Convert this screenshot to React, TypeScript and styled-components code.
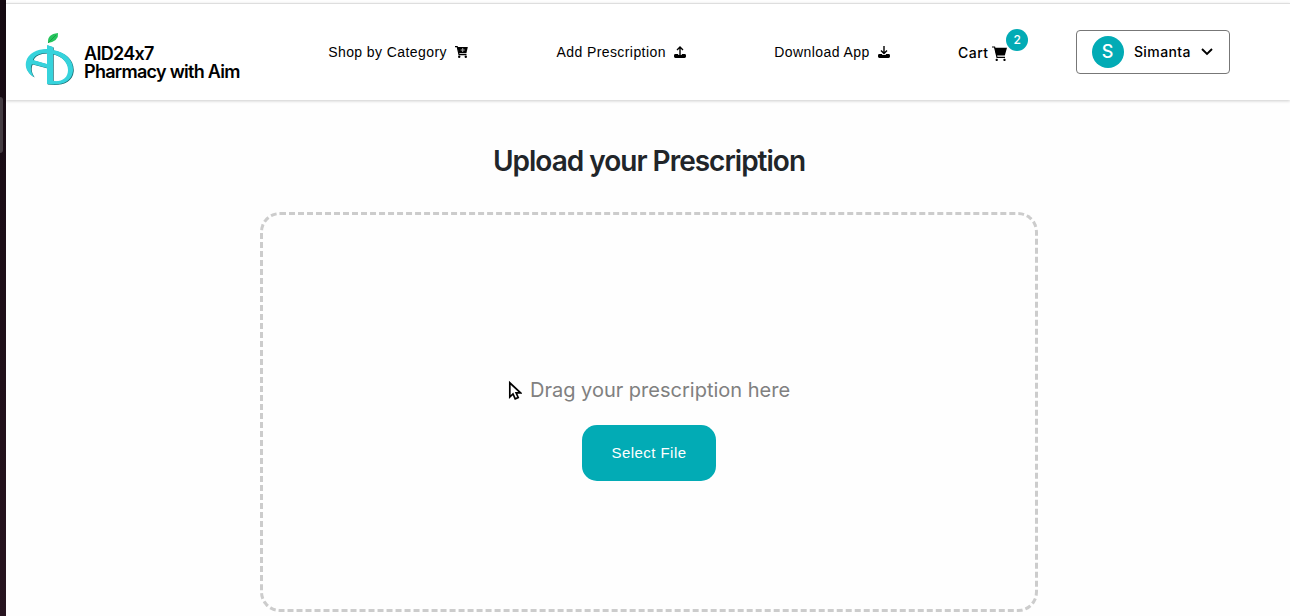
import React from "react";
import styled, { createGlobalStyle } from "styled-components";

const GlobalStyle = createGlobalStyle`
  *, *::before, *::after { box-sizing: border-box; }
  body { margin: 0; background: #fefefe; color: #000; font-family: Inter, sans-serif; }
`;

const Shell = styled.div`
  display: flex;
  min-height: 100vh;
`;

const DesktopEdge = styled.div`
  flex: 0 0 6px;
  padding-top: 97px;
  background: linear-gradient(#150a12, #27141f);
`;

const EdgeHandle = styled.div`
  width: 3px;
  height: 56px;
  border-radius: 0 3px 3px 0;
  background: #443c42;
`;

const Page = styled.div`
  flex: 1;
  min-width: 0;
  padding-top: 3px;
`;

const Header = styled.header`
  display: flex;
  align-items: center;
  justify-content: space-between;
  height: 97px;
  padding: 0 60px 0 19px;
  border-top: 1px solid #dedede;
  background: #fff;
  box-shadow: 0 1px 3px rgba(0, 0, 0, 0.2);
`;

const Brand = styled.a`
  display: flex;
  align-items: flex-end;
  gap: 9px;
  padding: 14px 20px 0 0;
  color: #000;
  text-decoration: none;
`;

const BrandName = styled.span`
  padding-bottom: 5px;
  font-size: 18px;
  font-weight: 600;
  line-height: 18px;
  letter-spacing: -0.04em;
  white-space: nowrap;
`;

const NavLink = styled.a`
  display: flex;
  align-items: center;
  gap: 8px;
  padding-right: ${(p: { $last?: boolean }) => (p.$last ? "0" : "20px")};
  color: #000;
  font: 14px/20px "Liberation Sans", sans-serif;
  letter-spacing: 0.03em;
  white-space: nowrap;
  text-decoration: none;
`;

const CartLink = styled.a`
  position: relative;
  display: flex;
  align-items: center;
  gap: 4px;
  padding-top: 2px;
  color: #000;
  font-size: 14px;
  font-weight: 500;
  line-height: 20px;
  letter-spacing: 0.03em;
  text-decoration: none;
`;

const Badge = styled.span`
  position: absolute;
  top: -12px;
  right: -21px;
  width: 22px;
  height: 22px;
  border-radius: 50%;
  background: #02abb5;
  color: #fff;
  font-size: 12px;
  line-height: 22px;
  text-align: center;
`;

const AccountButton = styled.button`
  display: flex;
  align-items: center;
  gap: 10px;
  height: 44px;
  padding: 0 16px 0 15px;
  border: 1px solid #777;
  border-radius: 4px;
  background: #fff;
  color: #000;
  font: 500 14px/20px Inter, sans-serif;
  letter-spacing: 0.03em;
`;

const Avatar = styled.span`
  width: 32px;
  height: 32px;
  border-radius: 50%;
  background: #02abb5;
  color: #fff;
  font-size: 18px;
  line-height: 32px;
  text-align: center;
`;

const Main = styled.main`
  display: flex;
  flex-direction: column;
  align-items: center;
  padding: 41px 20px 4px 22px;
`;

const Title = styled.h1`
  margin: 0 0 31px;
  color: #212529;
  font-size: 28px;
  font-weight: 600;
  line-height: 40px;
  letter-spacing: -1px;
`;

const DropZone = styled.section`
  display: flex;
  flex-direction: column;
  align-items: center;
  justify-content: center;
  gap: 21px;
  width: 100%;
  max-width: 778px;
  min-height: 400px;
  padding-top: 32px;
  border: 3px dashed #ccc;
  border-radius: 20px;
`;

const Hint = styled.p`
  display: flex;
  align-items: center;
  gap: 8px;
  margin: 0;
  color: gray;
  font-size: 20px;
  line-height: 28px;
`;

const SelectButton = styled.button`
  height: 56px;
  padding: 0 30px;
  border: 0;
  border-radius: 15px;
  background: #02abb5;
  color: #fff;
  font: 15px/20px "Liberation Sans", sans-serif;
  letter-spacing: 0.03em;
`;

const Logo = () => (
  <svg width="50" height="54" viewBox="0 0 50 54" aria-hidden="true">
    <path d="M23 11 Q22 2 33 1 Q34 9 23 11Z" fill="#25c45c" />
    <path d="M23 11L31 3" stroke="#0c8a3d" strokeWidth="0.6" />
    <path
      fill="#176b72"
      fillRule="evenodd"
      transform="translate(0.7 0.6)"
      d="M22 13L28 15V18C40 20 49 28 48 39C47 50 36 54 22 52V36L7 32C5 36 6 40 9 45C2 41 0 35 1 30C3 21 12 17 22 17ZM22 21C14 21 9 24 8 28L22 32ZM28 22V49C37 50 43 46 43 38C43 30 36 24 28 22Z"
    />
    <path
      fill="#36d3dc"
      fillRule="evenodd"
      d="M22 13L28 15V18C40 20 49 28 48 39C47 50 36 54 22 52V36L7 32C5 36 6 40 9 45C2 41 0 35 1 30C3 21 12 17 22 17ZM22 21C14 21 9 24 8 28L22 32ZM28 22V49C37 50 43 46 43 38C43 30 36 24 28 22Z"
    />
  </svg>
);

const CategoryCart = () => (
  <svg width="13" height="12" viewBox="0 0 13 12" aria-hidden="true">
    <path d="M0 0.7H2.2L4 8.6H11.5" fill="none" stroke="#000" strokeWidth="1.2" />
    <path d="M2.4 1H12.8L11.4 7.2H3.8Z" />
    <circle cx="4.2" cy="10.7" r="1.2" />
    <circle cx="10.8" cy="10.7" r="1.2" />
    <path d="M7.7 2V6M5.7 4H9.7" stroke="#aaa" strokeWidth="1" />
  </svg>
);

const Cart = () => (
  <svg width="15" height="15" viewBox="0 0 15 15" aria-hidden="true">
    <path d="M0 1H2.6L5 11.3H13" fill="none" stroke="#000" strokeWidth="1.2" />
    <path d="M2.6 1.8H15L12.8 9.4H4.4Z" />
    <rect x="3.6" y="12.8" width="2.2" height="2.2" rx="0.8" />
    <rect x="11.4" y="12.8" width="2.2" height="2.2" rx="0.8" />
  </svg>
);

const Transfer = ({ up }: { up?: boolean }) => (
  <svg width="12" height="12" viewBox="0 0 12 12" aria-hidden="true">
    <path d="M1.4 8H4.2V9H7.8V8H10.6Q12 8 12 9.4V10.6Q12 12 10.6 12H1.4Q0 12 0 10.6V9.4Q0 8 1.4 8Z" />
    <path
      d={up ? "M6 9V1.2M3 4L6 1L9 4" : "M6 0V7.6M3 4.6L6 7.6L9 4.6"}
      fill="none"
      stroke="#000"
      strokeWidth="1.4"
    />
  </svg>
);

const Chevron = () => (
  <svg width="12" height="8" viewBox="0 0 12 8" aria-hidden="true">
    <path d="M1 1L6 6L11 1" fill="none" stroke="#000" strokeWidth="1.9" />
  </svg>
);

const Pointer = () => (
  <svg width="14" height="20" viewBox="0 0 14 20" aria-hidden="true">
    <path d="M1.8 2.8V17L5 14L7.2 18.8L10.2 17.5L8.1 12.8H12.5Z" fill="#fff" stroke="#000" strokeWidth="1.7" />
  </svg>
);

export default function App() {
  return (
    <>
      <GlobalStyle />
      <Shell>
        <DesktopEdge>
          <EdgeHandle />
        </DesktopEdge>
        <Page>
          <Header>
            <Brand href="#">
              <Logo />
              <BrandName>
                AID24x7
                <br />
                Pharmacy with Aim
              </BrandName>
            </Brand>
            <NavLink href="#category">
              Shop by Category <CategoryCart />
            </NavLink>
            <NavLink href="#prescription">
              Add Prescription <Transfer up />
            </NavLink>
            <NavLink href="#download" $last>
              Download App <Transfer />
            </NavLink>
            <CartLink href="#cart">
              Cart <Cart />
              <Badge>2</Badge>
            </CartLink>
            <AccountButton type="button">
              <Avatar>S</Avatar>
              Simanta
              <Chevron />
            </AccountButton>
          </Header>
          <Main>
            <Title>Upload your Prescription</Title>
            <DropZone>
              <Hint>
                <Pointer />
                Drag your prescription here
              </Hint>
              <SelectButton type="button">Select File</SelectButton>
            </DropZone>
          </Main>
        </Page>
      </Shell>
    </>
  );
}
